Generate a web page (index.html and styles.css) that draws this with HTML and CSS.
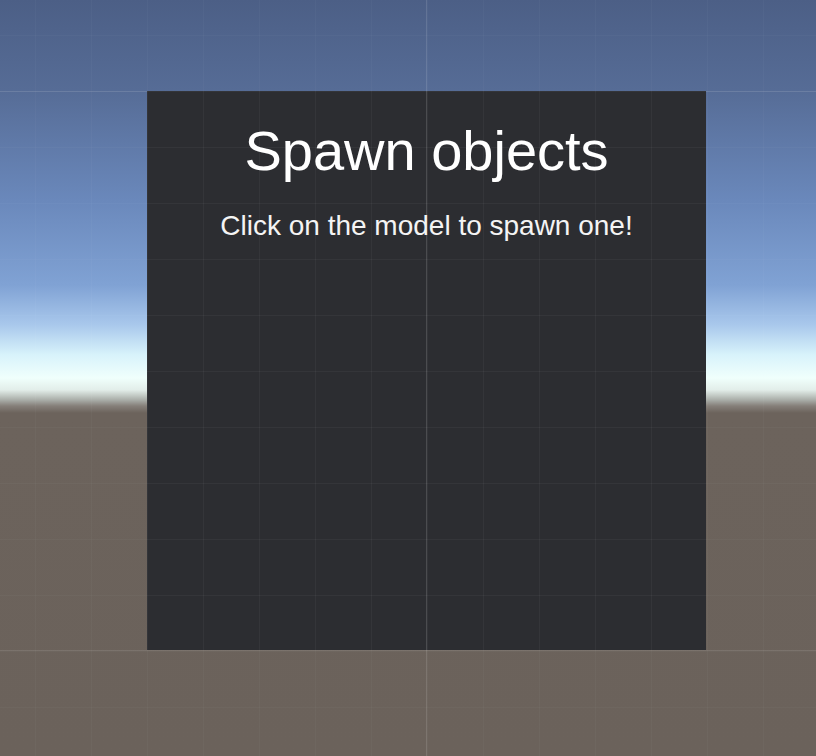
FILE: index.html
```html
<!DOCTYPE html>
<html>
<head>
<meta charset="utf-8">
<link rel="stylesheet" href="styles.css">
</head>
<body>
<div class="scene">
  <div class="panel">
    <h1 class="title">Spawn objects</h1>
    <p class="subtitle">Click on the model to spawn one!</p>
  </div>
</div>
</body>
</html>
```
FILE: styles.css
```css
html, body {
  margin: 0;
  padding: 0;
}
body {
  width: 816px;
  height: 756px;
  overflow: hidden;
  font-family: "Liberation Sans", Arial, sans-serif;
}
.scene {
  box-sizing: border-box;
  width: 816px;
  height: 756px;
  padding-top: 91px;
  padding-left: 147px;
  background:
    linear-gradient(rgba(255,255,255,0.12), rgba(255,255,255,0.12)) 426px 0 / 1px 100% no-repeat,
    linear-gradient(rgba(255,255,255,0.1), rgba(255,255,255,0.1)) 0 91px / 100% 1px no-repeat,
    linear-gradient(rgba(255,255,255,0.1), rgba(255,255,255,0.1)) 0 650px / 100% 1px no-repeat,
    linear-gradient(to right, rgba(255,255,255,0.022) 1px, transparent 1px) 35px 0 / 56px 100%,
    linear-gradient(to bottom, rgba(255,255,255,0.022) 1px, transparent 1px) 0 35px / 100% 56px,
    linear-gradient(to bottom,
      #4c5f86 0px,
      #566c96 90px,
      #6a88bb 200px,
      #80a2d4 285px,
      #a9c8ec 325px,
      #d8f3fb 355px,
      #f0fffc 378px,
      #e2ede9 390px,
      #a9ada8 400px,
      #857f79 406px,
      #6c635c 413px,
      #6b625b 756px);
}
.panel {
  box-sizing: border-box;
  width: 559px;
  height: 559px;
  padding-top: 32px;
  text-align: center;
  color: #ffffff;
  background:
    linear-gradient(rgba(255,255,255,0.15), rgba(255,255,255,0.15)) 279px 0 / 1px 100% no-repeat,
    linear-gradient(to right, rgba(255,255,255,0.04) 1px, transparent 1px) 0 0 / 56px 56px,
    linear-gradient(to bottom, rgba(255,255,255,0.04) 1px, transparent 1px) 0 0 / 56px 56px,
    #2c2d31;
}
.title {
  margin: 0;
  font-size: 56px;
  line-height: 56px;
  font-weight: normal;
}
.subtitle {
  margin: 33px 0 0 0;
  font-size: 28px;
  line-height: 28px;
  color: #f4f4f4;
}
```
